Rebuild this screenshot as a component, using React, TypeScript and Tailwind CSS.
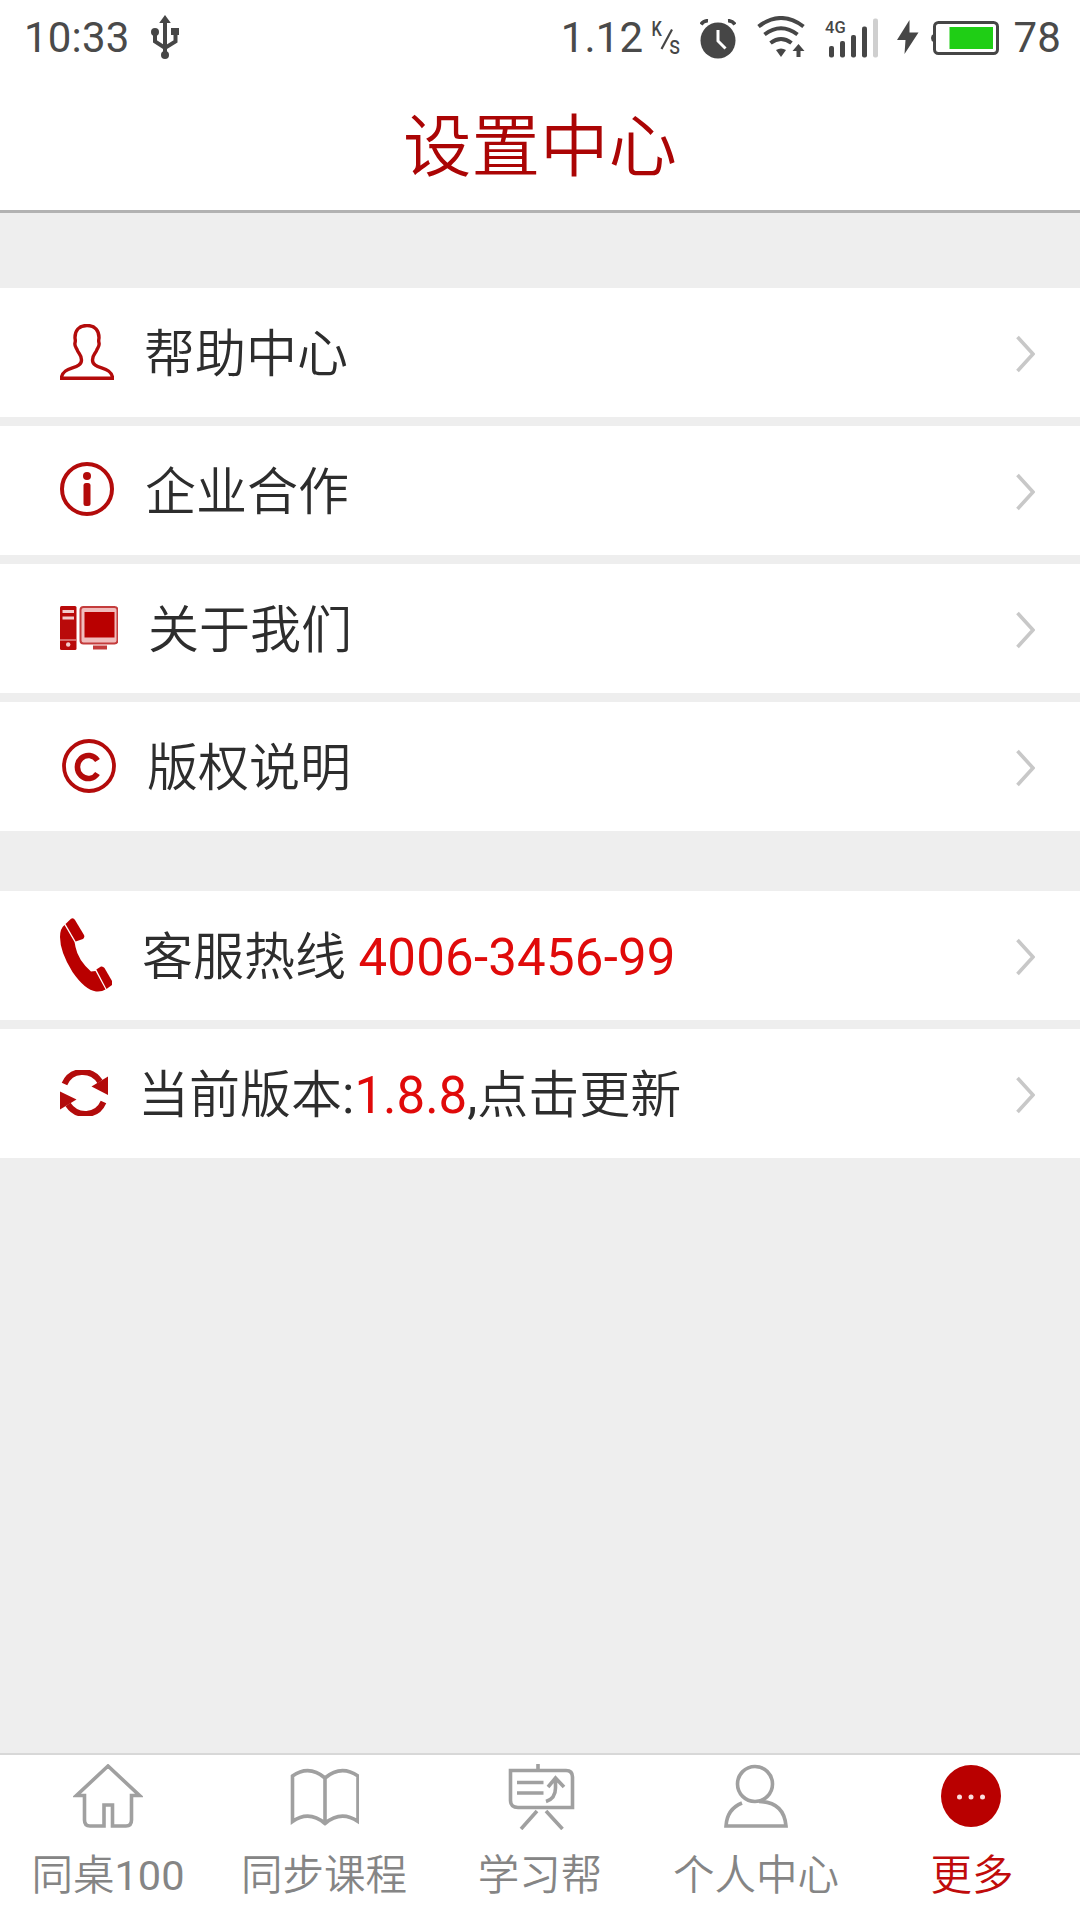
import type { ReactNode } from "react";

const RED = "#b30b0b";

function UsbIcon() {
  return (
    <svg width="28" height="44" viewBox="0 0 28 44" fill="none" stroke="#464646" strokeWidth="4">
      <path d="M14 5V40" />
      <path d="M4 18V26.500L14 33L24.500 26.500V18" />
      <path d="M14 0L19.800 8H8.200Z" fill="#464646" stroke="none" />
      <circle cx="4" cy="17" r="4" fill="#464646" stroke="none" />
      <rect x="20" y="13" width="8" height="7" fill="#464646" stroke="none" />
      <circle cx="14" cy="40" r="4" fill="#464646" stroke="none" />
    </svg>
  );
}

function SpeedUnit() {
  return (
    <svg width="32" height="44" viewBox="0 0 32 44" fill="#464646" fontFamily="Roboto, sans-serif">
      <text x="0.500" y="21" fontSize="20" fontWeight="500" textLength="10.500" lengthAdjust="spacingAndGlyphs">
        K
      </text>
      <path d="M10.500 34L21 14.500" stroke="#464646" strokeWidth="2.200" />
      <text x="18" y="39" fontSize="25" textLength="11.500" lengthAdjust="spacingAndGlyphs">
        s
      </text>
    </svg>
  );
}

function AlarmIcon() {
  return (
    <svg width="36" height="40" viewBox="0 0 36 40" fill="none">
      <ellipse cx="18" cy="21.500" rx="17.500" ry="18" fill="#464646" />
      <path d="M1 5.500Q3.500 1.500 8 1.700M35 5.500Q32.500 1.500 28 1.700" stroke="#464646" strokeWidth="3.500" />
      <path d="M18 11V22L25.500 29.500" stroke="#fff" strokeWidth="3" />
    </svg>
  );
}

function WifiIcon() {
  return (
    <svg width="48" height="42" viewBox="0 0 48 42" fill="none" stroke="#464646" strokeWidth="4">
      <path d="M1.500 10.500Q24 -6.500 46.500 10.500" />
      <path d="M7.500 18.500Q24 6 40.500 18.500" />
      <path d="M13.500 27Q24 19 34.500 27" />
      <path d="M19 34Q24 31 29 34L24 41Z" fill="#464646" stroke="none" />
      <path d="M41.500 28L47.500 35H43.500V41H39.500V35H35.500Z" fill="#464646" stroke="none" />
    </svg>
  );
}

const bars = [
  { x: 4, y: 28, color: "#464646" },
  { x: 15, y: 23, color: "#464646" },
  { x: 26, y: 17, color: "#464646" },
  { x: 37, y: 8.5, color: "#464646" },
  { x: 48, y: 0.5, color: "#cfcfcf" },
];

function SignalIcon() {
  return (
    <svg width="54" height="40" viewBox="0 0 54 40" overflow="visible">
      <text x="0" y="14.500" fontFamily="Roboto, sans-serif" fontWeight="500" fontSize="16.500" fill="#464646">
        4G
      </text>
      {bars.map((b) => (
        <rect key={b.x} x={b.x} y={b.y} width="5" height={39.5 - b.y} rx="2" fill={b.color} />
      ))}
    </svg>
  );
}

function BatteryIcon() {
  return (
    <svg width="68" height="34" viewBox="0 0 68 34" fill="none">
      <rect x="3.500" y="1.500" width="63" height="31" rx="4" stroke="#464646" strokeWidth="3" />
      <path d="M2.500 13V21Q0 20 0 17Q0 14 2.500 13Z" fill="#464646" />
      <rect x="18.500" y="6" width="43.500" height="22" fill="#1fce15" />
    </svg>
  );
}

function StatusBar() {
  return (
    <div className="flex h-[74px] items-center pl-[24px] pr-[19px] text-[42px] tracking-[0.2px] text-[#4a4a4a]">
      <span>10:33</span>
      <span className="ml-[21px]">
        <UsbIcon />
      </span>
      <span className="ml-auto">1.12</span>
      <span className="ml-[8px]">
        <SpeedUnit />
      </span>
      <span className="ml-[17px] pt-[3px]">
        <AlarmIcon />
      </span>
      <span className="ml-[21px]">
        <WifiIcon />
      </span>
      <span className="ml-[20px] pt-[2px]">
        <SignalIcon />
      </span>
      <svg className="ml-[18px]" width="22" height="34" viewBox="0 0 22 34">
        <path d="M12.500 0L0 20H8.500L7.500 34L21.500 12.500H12.500Z" fill="#464646" />
      </svg>
      <span className="ml-[12px] pt-px">
        <BatteryIcon />
      </span>
      <span className="ml-[14px]">78</span>
    </div>
  );
}

function HelpIcon() {
  return (
    <svg width="54" height="56" viewBox="0 0 54 56" fill="none" stroke={RED} strokeWidth="3.400" className="mb-px">
      <path d="M27 1.500C18.500 1.500 15 7 15 13.500C15 15.500 15.800 16.500 15 19C14.300 22 16 23.500 17 25.500C18.500 30 21.500 30.500 21.500 36C21.500 43.500 11 43 5.500 47C2.500 49.300 1.500 51.500 1.500 54.300H52.500C52.500 51.500 51.500 49.300 48.500 47C43 43 32.500 43.500 32.500 36C32.500 30.500 35.500 30 37 25.500C38 23.500 39.700 22 39 19C38.200 16.500 39 15.500 39 13.500C39 7 35.500 1.500 27 1.500Z" />
    </svg>
  );
}

function InfoIcon() {
  return (
    <svg width="55" height="54" viewBox="0 0 55 54" className="mb-[3px]">
      <circle cx="27" cy="27" r="25" fill="none" stroke={RED} strokeWidth="4" />
      <circle cx="27" cy="14" r="4" fill={RED} />
      <rect x="23.500" y="21" width="7" height="23" rx="2.500" fill={RED} />
    </svg>
  );
}

function ComputerIcon() {
  return (
    <svg width="58" height="44" viewBox="0 0 58 44" className="mb-px">
      <rect width="16.500" height="44" rx="1.500" fill="#b90a0a" />
      <path d="M2.500 5.500H14M2.500 12H14" stroke="#f3cccc" strokeWidth="3" />
      <path d="M0 34H16.500" stroke="#e08a8a" strokeWidth="1.500" />
      <circle cx="8.200" cy="38.500" r="2.200" fill="#f3cccc" />
      <rect x="20.500" y="1" width="37" height="36.500" rx="3" fill="#f0bcbc" stroke="#c43c3c" strokeWidth="2" />
      <rect x="24.500" y="6" width="30" height="25.500" fill="#b90000" />
      <path d="M33 39.500H47V43.500H33Z" fill="#c43c3c" />
    </svg>
  );
}

function CopyrightIcon() {
  return (
    <svg width="57" height="56" viewBox="0 0 57 56">
      <circle cx="29" cy="27" r="25" fill="none" stroke={RED} strokeWidth="3.800" />
      <path d="M37.500 21.500A11 11.500 0 1 0 37.500 34.500" fill="none" stroke={RED} strokeWidth="5.600" />
    </svg>
  );
}

function PhoneIcon() {
  return (
    <svg width="52" height="74" viewBox="0 0 52 74" className="mb-[2px]">
      <path
        d="M4.500 7L14.500 24Q15 26 15.500 29Q18 42 31 53.500L35.500 53L45.500 71.500Q42 74 36 73.500Q25 72 12.500 54Q0 34 0 19Q0 10.500 4.500 7Z"
        fill="#b90000"
      />
      <path d="M5.500 6L11 0.800Q13.500 -0.500 15 2L24 17Q25 19.500 23 21L15.700 23.500Z" fill="#b90000" />
      <path d="M36.300 51.500L41 48.500Q43 48 44.500 50L52 63V67L46.500 71Z" fill="#b90000" />
    </svg>
  );
}

function RefreshIcon() {
  return (
    <svg width="48" height="46" viewBox="0 0 48 46" className="mb-px">
      <path d="M4.500 14C11 -1 31 -2 40 11.500" fill="none" stroke={RED} strokeWidth="6" />
      <path d="M48 6.500V25L31.500 16.500Z" fill={RED} />
      <path d="M43.500 32C37 47 17 48 8 34.500" fill="none" stroke={RED} strokeWidth="6" />
      <path d="M0 39.500V21.500L16.500 29.500Z" fill={RED} />
    </svg>
  );
}

function Row({ icon, children }: { icon: ReactNode; children: ReactNode }) {
  return (
    <button className="flex h-[129px] w-full items-center bg-white pl-[60px] pr-[45px] text-left">
      {icon}
      <span className="ml-[30px] pt-[4px] text-[51px] leading-none font-[350] whitespace-pre">{children}</span>
      <svg className="ml-auto mt-[3px]" width="19" height="38" viewBox="0 0 19 38" fill="none">
        <path d="M1.500 2L17 19L1.500 36" stroke="#c8c8c8" strokeWidth="3.600" />
      </svg>
    </button>
  );
}

const tabs = [
  {
    label: "同桌",
    suffix: "100",
    icon: (
      <path d="M34 2L2.500 31.500H10.500V56Q10.500 62 16 62H30V41H38.500V62H52Q57.500 62 57.500 56V31.500H65.500Z" />
    ),
  },
  {
    label: "同步课程",
    icon: (
      <path d="M35 14Q19 0.500 2.500 12V57.500Q19 46 35 59.500Q51 46 68 57.500V12Q51 0.500 35 14V59" />
    ),
  },
  {
    label: "学习帮",
    icon: (
      <>
        <path d="M32 0V5M4.500 6.500H60Q66.500 6.500 66.500 13V43.500H12Q4.500 43.500 4.500 36.500Z" />
        <path d="M11 18.500H37.500M11 29H37.500M40 37.500Q49.500 34.500 49.500 24V14M42 23L49.500 14L58 23M31 47L15 65M40 47L56.500 65" />
      </>
    ),
  },
  {
    label: "个人中心",
    icon: (
      <>
        <circle cx="33" cy="20" r="17.500" />
        <path d="M20 39Q5 45 4 62H64Q62 38 37 37.500" />
      </>
    ),
  },
];

function TabBar() {
  return (
    <nav className="grid h-[167px] grid-cols-5 border-t-2 border-[#d8d8d8] bg-white text-[41.5px] font-[350] text-[#858585]">
      {tabs.map((tab) => (
        <button key={tab.label} className="flex flex-col items-center pt-[9px]">
          <svg width="70" height="66" viewBox="-1 0 70 66" fill="none" stroke="#a0a0a0" strokeWidth="3.600">
            {tab.icon}
          </svg>
          <span className="mt-[24px] leading-[44px] whitespace-nowrap">
            {tab.label}
            {tab.suffix && <span className="font-normal">{tab.suffix}</span>}
          </span>
        </button>
      ))}
      <button className="flex flex-col items-center pt-[9px] text-[#c00b0b]">
        <svg width="70" height="66" viewBox="0 0 70 66">
          <ellipse cx="34" cy="32" rx="30" ry="31" fill="#b90000" />
          <circle cx="22.500" cy="33" r="2.500" fill="#fbdede" />
          <circle cx="34" cy="33" r="2.500" fill="#fbdede" />
          <circle cx="45.500" cy="33" r="2.500" fill="#fbdede" />
        </svg>
        <span className="mt-[24px] leading-[44px]">更多</span>
      </button>
    </nav>
  );
}

export default function App() {
  return (
    <div className="flex h-[1920px] w-[1080px] flex-col overflow-hidden bg-[#eeeeee] font-[Roboto,'Noto_Sans_CJK_SC',sans-serif] text-[#2d2d2d]">
      <header className="h-[213px] border-b-[3px] border-[#b2b2b2] bg-white">
        <StatusBar />
        <h1 className="pt-[39px] text-center text-[68.5px] leading-[70px] font-[350] text-[#ab0505]">设置中心</h1>
      </header>

      <main className="flex flex-1 flex-col pt-[75px]">
        <section className="flex flex-col gap-[9px]">
          <Row icon={<HelpIcon />}>帮助中心</Row>
          <Row icon={<InfoIcon />}>企业合作</Row>
          <Row icon={<ComputerIcon />}>关于我们</Row>
          <Row icon={<CopyrightIcon />}>版权说明</Row>
        </section>

        <section className="mt-[60px] flex flex-col gap-[9px]">
          <Row icon={<PhoneIcon />}>
            客服热线 <span className="font-normal tracking-[0.2px] text-[#e00a0a]">4006-3456-99</span>
          </Row>
          <Row icon={<RefreshIcon />}>
            当前版本
            <span className="font-normal">
              :<span className="text-[#e00a0a]">1.8.8</span>,
            </span>
            点击更新
          </Row>
        </section>
      </main>

      <TabBar />
    </div>
  );
}
